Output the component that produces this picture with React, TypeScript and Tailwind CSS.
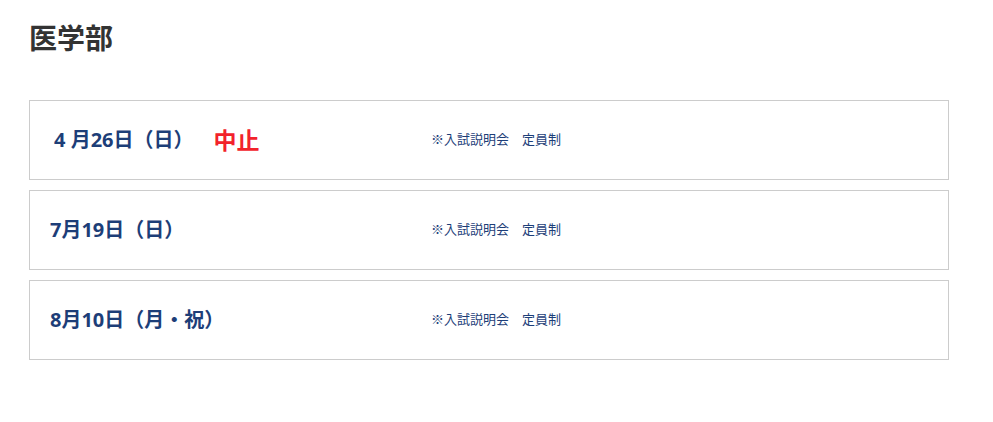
export default function App() {
  const rows = [
    { date: "4 月26日（日）", cancelled: true },
    { date: "7月19日（日）", cancelled: false },
    { date: "8月10日（月・祝）", cancelled: false },
  ];

  return (
    <div
      className="min-h-screen bg-white px-[29px] pt-[18px]"
      style={{ fontFamily: '"Open Sans", "Noto Sans CJK JP", sans-serif' }}
    >
      <h2 className="text-[28px] font-bold leading-[40px] text-[#333333]">医学部</h2>

      <div className="mt-[42px] flex w-[920px] flex-col gap-[10px]">
        {rows.map((row) => (
          <div
            key={row.date}
            className="flex h-[80px] items-center border border-[#cccccc] pl-[20px]"
          >
            <div className="flex w-[381px] items-center">
              <span
                className={`text-[20px] font-bold text-[#1d3e78] ${row.cancelled ? "pl-[4px]" : ""}`}
              >
                {row.date}
              </span>
              {row.cancelled && (
                <span className="ml-[20px] text-[23px] font-bold text-[#f2222b]">中止</span>
              )}
            </div>
            <span className="text-[13px] text-[#1d3e78]">※入試説明会　定員制</span>
          </div>
        ))}
      </div>
    </div>
  );
}
